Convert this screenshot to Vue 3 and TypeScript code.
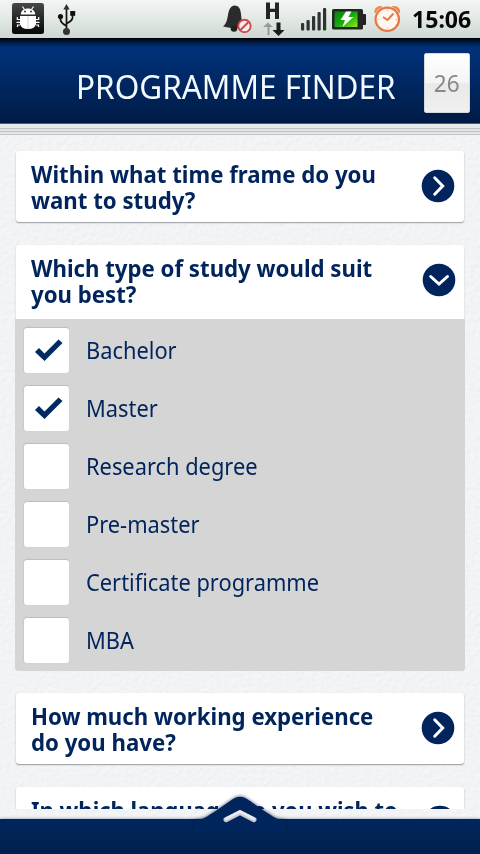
<script setup lang="ts">
interface Option { label: string; checked: boolean }
interface Question { lines: string[]; options?: Option[] }

const questions: Question[] = [
  { lines: ['Within what time frame do you', 'want to study?'] },
  {
    lines: ['Which type of study would suit', 'you best?'],
    options: [
      { label: 'Bachelor', checked: true },
      { label: 'Master', checked: true },
      { label: 'Research degree', checked: false },
      { label: 'Pre-master', checked: false },
      { label: 'Certificate programme', checked: false },
      { label: 'MBA', checked: false },
    ],
  },
  { lines: ['How much working experience', 'do you have?'] },
  { lines: ['In which language do you wish to'] },
]
</script>

<template>
  <div class="screen">
    <div class="status">
      <svg class="status-icons" width="480" height="38" viewBox="0 0 480 38">
        <defs>
          <linearGradient id="dark" x1="0" y1="0" x2="0" y2="1"><stop offset="0" stop-color="#484848" /><stop offset="1" stop-color="#050505" /></linearGradient>
          <linearGradient id="green" x1="0" y1="0" x2="1" y2="1"><stop offset="0" stop-color="#087f08" /><stop offset=".5" stop-color="#16a80e" /><stop offset="1" stop-color="#8df01a" /></linearGradient>
        </defs>
        <rect x="12" y="3" width="32" height="31" rx="2.5" fill="url(#dark)" />
        <g fill="#fff" stroke="#fff">
          <path d="M24.500 9.500L22.500 6.500M31.500 9.500L33.500 6.500" stroke-width="1.200" />
          <path d="M20.800 14.500C20.800 6.500 35.200 6.500 35.200 14.500Z" stroke="none" />
          <path d="M20 16H36V24Q35 29 28 29Q21 29 20 24Z" stroke="none" />
          <path d="M20 19.500H17.300V17M20 22.300H16.500M20 25H17.500V27M36 19.500H38.700V17M36 22.300H39.500M36 25H38.500V27" fill="none" stroke-width="1.200" />
        </g>
        <path d="M28 16V29" stroke="#bbb" stroke-width=".7" />
        <circle cx="25" cy="11.500" r=".9" fill="#222" /><circle cx="31" cy="11.500" r=".9" fill="#222" />
        <g fill="none" stroke="#111" stroke-width="1.700">
          <path d="M66.500 8V31M60.500 17V20Q61 23 66.500 26M72.500 14V18Q72 21 66.500 23.500" />
          <path d="M66.500 4L69.700 9.500H63.300Z" fill="#333" stroke="none" />
          <circle cx="60.500" cy="16.500" r="2.600" fill="#111" stroke="none" />
          <rect x="70.200" y="11" width="5" height="4.800" fill="#111" stroke="none" />
          <circle cx="66.500" cy="31.500" r="3.500" fill="#333" stroke="none" />
        </g>
        <path d="M223 26.500C226 24 227 21 228 15C229 9 231 5.500 234.500 5.500C239 5.500 240.500 9 241 14C241.500 20 242 23 245 26.500Q241 28 237 28Q229 28 223 26.500Z" fill="#2b2b2b" />
        <circle cx="234" cy="28.500" r="3.300" fill="#222" />
        <circle cx="244.500" cy="26" r="6.200" fill="#f8efef" stroke="#d64848" stroke-width="1.900" />
        <path d="M240.500 30L248.500 22" stroke="#d64848" stroke-width="2" />
        <path d="M266 2.500H270V8.700H275V2.500H279V19H275V12H270V19H266Z" fill="#242424" />
        <path d="M267.500 35V27H263L268 22.500L273 27H269.500V35Z" fill="#969b98" />
        <path d="M276.500 22.500H280.500V30H284.500L278.500 36L272.500 30H276.500Z" fill="#1b1b1b" />
        <g fill="#303331">
          <rect x="301" y="23" width="3.200" height="7.500" rx="1" /><rect x="306.500" y="20" width="3.200" height="10.500" rx="1" />
          <rect x="312" y="16" width="3.200" height="14.500" rx="1" /><rect x="317.500" y="12" width="3.200" height="18.500" rx="1" />
          <rect x="323" y="8" width="3.200" height="22.500" rx="1" />
        </g>
        <rect x="361" y="14" width="5" height="11" rx="1" fill="#222" />
        <rect x="332" y="9" width="31" height="20.500" rx="1.500" fill="#242424" />
        <rect x="334.500" y="11.500" width="23" height="15.500" fill="url(#green)" />
        <path d="M346 11.500H351.500L348.500 17H353.500L342.500 27L345 20H340.500Z" fill="#fff" />
        <path d="M375 13Q374 6 382 6.500Q377 9 375 13ZM399.500 13Q400.500 6 392.500 6.500Q397.500 9 399.500 13Z" fill="#ed8948" stroke="#ed8948" />
        <circle cx="387.300" cy="19.300" r="11.700" fill="#fff8ef" stroke="#ea7545" stroke-width="2.200" />
        <path d="M383 17L387.500 20L393.500 13.500" fill="none" stroke="#ea7545" stroke-width="1.900" />
        <path d="M387.300 9.500V11M387.300 27.500V29M377.500 19.300H379M395.600 19.300H397.100" stroke="#edb08a" />
      </svg>
      <span class="clock">15:06</span>
    </div>
    <header class="header">
      <h1>PROGRAMME FINDER</h1>
      <div class="count"><span>26</span></div>
    </header>
    <div class="stripes"></div>
    <main class="content">
      <svg class="paper" width="480" height="685">
        <filter id="grain" x="0" y="0" width="100%" height="100%">
          <feTurbulence type="fractalNoise" baseFrequency=".22" numOctaves="3" seed="4" result="n" />
          <feDiffuseLighting in="n" lighting-color="#f7f8fa" surfaceScale=".3" diffuseConstant="1.17"><feDistantLight azimuth="55" elevation="56" /></feDiffuseLighting>
        </filter>
        <rect width="480" height="685" filter="url(#grain)" opacity=".5" />
      </svg>
      <div class="list">
        <section v-for="q in questions" :key="q.lines[0]" class="question" :class="{ open: q.options }">
          <div class="card">
            <h2><span v-for="line in q.lines" :key="line">{{ line }}</span></h2>
            <svg class="arrow" width="34" height="34" viewBox="0 0 34 34">
              <circle cx="17" cy="17" r="16.300" fill="#00245b" />
              <path v-if="q.options" d="M8.700 13.500L17 21L25.500 13.500" />
              <path v-else d="M13.700 8.800L21.700 17L13.700 25.200" />
            </svg>
          </div>
          <div v-if="q.options" class="options">
            <div v-for="o in q.options" :key="o.label" class="option">
              <div class="box">
                <svg v-if="o.checked" width="45" height="45" viewBox="0 0 45 45"><path d="M11 24L15 20L20.500 25.500L34.500 11.500L38.500 15L20.500 33Z" /></svg>
              </div>
              <span>{{ o.label }}</span>
            </div>
          </div>
        </section>
      </div>
    </main>
    <footer class="footer">
      <svg class="handle" width="100" height="40" viewBox="0 0 100 40">
        <path class="hump" d="M4 29.500C13 29.500 19 24 27 19L43 8Q50 3.500 57 8L73 19C81 24 87 29.500 96 29.500V40H4Z" />
        <path d="M36 28.700L50 21.500L64 28.700" fill="none" stroke="#c9ccd2" stroke-width="5" stroke-linecap="round" />
        <path d="M36 27.700L50 20.600L64 27.700" fill="none" stroke="#e9ebee" stroke-width="2.500" stroke-linecap="round" />
      </svg>
    </footer>
  </div>
</template>

<style>
body { background: #f0f1f2; overflow: hidden; }
</style>

<style scoped>
.screen { width: 480px; height: 854px; display: flex; flex-direction: column; overflow: hidden; background: #f1f2f4; font-family: "Noto Sans", "Open Sans", sans-serif; color: #00245b; }
.status { position: relative; height: 38px; flex: none; display: flex; justify-content: flex-end; background: linear-gradient(#f2f5f3, #e2e9e5 50%, #cdd7d1); }
.status-icons { position: absolute; left: 0; top: 0; }
.clock { position: relative; padding-right: 8px; font-size: 24px; line-height: 38px; font-weight: 700; color: #080808; transform: scaleX(.96); transform-origin: 51px 0; white-space: nowrap; }
.header { height: 86px; flex: none; display: flex; align-items: flex-start; box-sizing: border-box; padding: 15px 10px 0 76px; background: linear-gradient(#000 0, #001a42 4px, #003078 9px, #003078 16px, #001c47 82px, #001a40); border-bottom: 1px solid #4b5c78; }
h1 { flex: 1; margin: 0; padding-top: 10px; font-size: 33px; line-height: 48px; font-weight: 400; color: #f2faff; white-space: nowrap; transform: scaleX(.954); transform-origin: 0 0; }
.count { width: 46px; height: 60px; flex: none; box-sizing: border-box; padding-bottom: 1px; border: 1px solid #d6d8dc; border-radius: 2px; background: linear-gradient(#fff, #f4f4f4 50%, #e9e9e9 51%, #f0f0f0); display: flex; align-items: center; justify-content: center; font-size: 24px; color: #888; }
.count span { transform: scaleX(.94); }
.stripes { height: 11px; flex: none; background: linear-gradient(#e9eaec 0 4px, #bfc1c4 4px 5px, #e4e5e7 5px 7px, #bfc1c4 7px 8px, #e4e5e7 8px 10px, #c4c6c9 10px); }
.content { position: relative; height: 684px; flex: none; }
.paper { position: absolute; left: 0; top: 0; }
.list { position: relative; height: 674px; box-sizing: border-box; padding: 16px 16px 0; overflow: hidden; display: flex; flex-direction: column; gap: 23px; }
.question { flex: none; }
.card { height: 71px; box-sizing: border-box; padding: 10px 9.500px 0 15px; display: flex; justify-content: space-between; background: #fff; border-radius: 3px; box-shadow: 0 1px 1px #a2a6aa, 0 1px 2px #c9ccd0; }
.open .card { height: 74px; padding-right: 8px; box-shadow: 0 1px 2px #c5c8cb; border-radius: 3px 3px 0 0; }
.open { margin-bottom: -1px; }
h2 { margin: 0; font-size: 23.500px; line-height: 26px; font-weight: 700; transform: scaleX(.945); transform-origin: 0 0; white-space: nowrap; }
.question:last-child h2 { transform: scaleX(.935); }
h2 span { display: block; }
.arrow { flex: none; margin-top: 8px; }
.open .arrow { margin-top: 7.500px; }
.arrow path { fill: none; stroke: #fff; stroke-width: 3; stroke-linecap: round; }
.options { position: relative; height: 352px; margin: 0 -1px; padding: 9px 9px 0; box-sizing: border-box; display: flex; flex-direction: column; gap: 12px; background: #d5d5d5; border-radius: 0 0 3px 3px; }
.option { height: 46px; display: flex; align-items: flex-start; gap: 17px; font-size: 24px; line-height: 46px; }
.option span { margin-top: -1px; transform: scaleX(.91); transform-origin: 0 0; white-space: nowrap; }
.box { width: 45px; height: 45px; flex: none; border-radius: 3px; background: #fff; box-shadow: 0 -1px 1px #bcbcbc, -1px 0 1px #cacaca; }
.box svg { display: block; }
.box path { fill: #002a60; }
.footer { position: relative; height: 35px; flex: none; background: linear-gradient(#00265e, #00204e); box-shadow: 0 0 3px #7d8795; }
.handle { position: absolute; left: 190px; top: -28px; }
.hump { fill: #00255c; filter: drop-shadow(0 -1px 1.500px rgba(0, 20, 50, .5)); }
</style>
